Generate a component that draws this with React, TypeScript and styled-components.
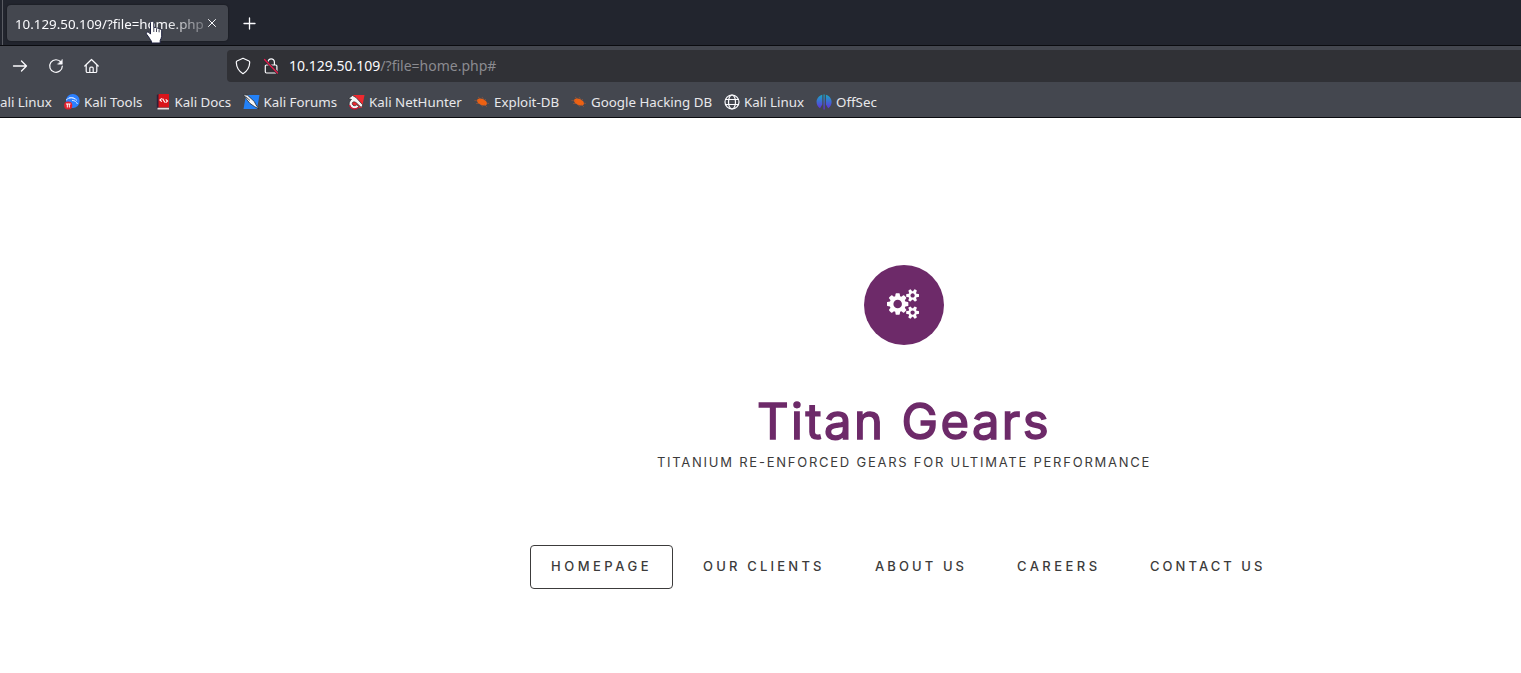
import React from "react";
import styled, { createGlobalStyle } from "styled-components";

const GlobalStyle = createGlobalStyle`
  * { box-sizing: border-box; }
  html, body { margin: 0; background: #fff; overflow: hidden; }
`;

const Page = styled.div`
  width: 100%;
  height: 673px;
  display: flex;
  flex-direction: column;
  overflow: hidden;
  font-family: "Noto Sans", sans-serif;
`;

const TabStrip = styled.div`
  height: 46px;
  flex: none;
  display: flex;
  align-items: center;
  background: #22252e;
  border-bottom: 1px solid #0b0c10;
  padding-left: 2px;
`;

const Separator = styled.span`
  width: 1px;
  height: 45px;
  background: #5a5c63;
  margin-right: 4px;
`;

const Tab = styled.div`
  position: relative;
  width: 221px;
  height: 36px;
  border-radius: 4px;
  background: #44474f;
  box-shadow: 0 0 2px rgba(0, 0, 0, 0.5);
  display: flex;
  align-items: center;
  padding: 0 9px 0 8px;
  justify-content: space-between;
`;

const TabTitle = styled.span`
  width: 190px;
  padding-top: 2px;
  overflow: hidden;
  white-space: nowrap;
  font-size: 13.33px;
  line-height: 20px;
  color: #fbfbfe;
  mask-image: linear-gradient(to right, #000 150px, rgba(0, 0, 0, 0.25) 190px);
`;

const Pointer = styled.svg`
  position: absolute;
  left: 138px;
  top: 15px;
`;

const NewTab = styled.span`
  display: flex;
  margin-left: 15px;
  padding-top: 2px;
`;

const NavBar = styled.div`
  height: 40px;
  flex: none;
  display: flex;
  align-items: center;
  background: #44474f;
`;

const NavButtons = styled.div`
  width: 227px;
  display: flex;
  gap: 20px;
  padding-left: 12px;
`;

const AddressBar = styled.div`
  flex: 1;
  height: 32px;
  display: flex;
  align-items: center;
  background: #303136;
  border-radius: 4px 0 0 4px;
  padding-left: 8px;
  font-size: 14px;
  line-height: 20px;
  color: #fbfbfe;
  white-space: nowrap;
`;

const ShieldSlot = styled.span`
  display: flex;
  margin-right: 12px;
`;

const LockSlot = styled.span`
  display: flex;
  margin-right: 10px;
`;

const UrlPath = styled.span`
  color: #8b8b90;
`;

const Bookmarks = styled.div`
  height: 32px;
  flex: none;
  display: flex;
  align-items: center;
  background: #44474f;
  border-bottom: 1px solid #0b0c10;
  padding-top: 1px;
  color: #e8e8eb;
  font-size: 13.33px;
  line-height: 18px;
  white-space: nowrap;
`;

const Bookmark = styled.div<{ $width: number; $gap?: number }>`
  width: ${(p) => p.$width}px;
  flex: none;
  display: flex;
  align-items: center;
  gap: ${(p) => p.$gap ?? 4}px;
`;

const Content = styled.main`
  flex: 1;
  margin-left: 287px;
  width: 1234px;
  display: flex;
  flex-direction: column;
  align-items: center;
  padding-top: 147px;
  font-family: Inter, "Open Sans", sans-serif;
  color: #3c3b3b;
`;

const Emblem = styled.div`
  width: 80px;
  height: 80px;
  border-radius: 50%;
  background: #6d2a69;
  display: flex;
  align-items: center;
  justify-content: center;
  padding-right: 3px;
  padding-bottom: 3px;
`;

const Title = styled.h1`
  margin: 45px 0 0;
  height: 63px;
  line-height: 64px;
  font-size: 49px;
  font-weight: 400;
  color: #6d2a69;
  letter-spacing: 2.4px;
  -webkit-text-stroke: 1.5px #6d2a69;
  stroke-linejoin: round;
  white-space: nowrap;
`;

const Tagline = styled.p`
  margin: 0;
  height: 18px;
  line-height: 18px;
  font-size: 13px;
  letter-spacing: 1.76px;
  white-space: nowrap;
`;

const Menu = styled.nav`
  margin-top: 74px;
  margin-left: 7px;
  display: flex;
  gap: 10px;
`;

const MenuItem = styled.a<{ $width: number; $spacing: number; $active?: boolean }>`
  width: ${(p) => p.$width}px;
  height: 44px;
  display: flex;
  align-items: center;
  padding: 0 0 2px ${(p) => (p.$active ? 20 : 19)}px;
  border: 1px solid ${(p) => (p.$active ? "#3c3b3b" : "transparent")};
  border-radius: 4px;
  font-size: 13px;
  font-weight: 500;
  letter-spacing: ${(p) => p.$spacing}px;
  white-space: nowrap;
`;

const line = { fill: "none", stroke: "#fbfbfe", strokeLinecap: "round", strokeLinejoin: "round" } as const;

const ToolsIcon = () => (
  <svg width="16" height="16" viewBox="0 0 16 16">
    <circle cx="8.8" cy="7" r="6.9" fill="#2b7fff" />
    <path d="M2 6.200C5 3.200 8 3 11 5M5 4c3-.8 6 0 8 2.500M8 6.500c3 0 4 1 5.500 3.500" fill="none" stroke="#d8e8ff" strokeWidth="1" />
    <circle cx="4.200" cy="11.500" r="4.100" fill="#e5202e" />
    <path d="M2 10h4.600M3.300 10v3.500M5.300 10v3.500" fill="none" stroke="#fff" strokeWidth="1" />
  </svg>
);

const DocsIcon = () => (
  <svg width="16" height="16" viewBox="0 0 16 16">
    <path d="M1.500 1 3 0h10v13.500H1.500z" fill="#d9151b" />
    <path d="M.8 1 2.500 0v13.500L.8 15z" fill="#2e2038" />
    <path d="M1.500 13.800H13v1.700H1.500z" fill="#e8dfe0" />
    <path d="M5.800 4.300 3.900 6l1.900 1.700M9.700 5.300 11.600 7 9.700 8.700M6.600 4.600l2.300 3.900" fill="none" stroke="#fff" strokeWidth="1.100" />
  </svg>
);

const ForumsIcon = () => (
  <svg width="17" height="16" viewBox="0 0 17 16">
    <path d="M3 1h13.500L14 15H.5z" fill="#2381f7" />
    <path d="M.3.600 4.500 1.200l6.800 6.300 1.500 3L16 15l-4.300-2.300L7 9.500l-3.200-4z" fill="#f7f7f7" stroke="#222831" strokeWidth=".8" />
    <path d="M2.500 2.500 7 6.500" stroke="#34383e" strokeWidth=".9" />
  </svg>
);

const HunterIcon = () => (
  <svg width="17" height="16" viewBox="0 0 17 16">
    <path d="M5 1h11.500L14 14H2z" fill="#ed292f" />
    <path
      d="M.5 4.500 4.500 1.500 8 3.500 14.800 11l-1.500 2.500-5-4.700C6 7 3.800 8 4.300 10c.5 2 3 2.300 4.500.8l2.200 2C8.500 16 3 15.500 1.500 12 .5 9.500 1.500 7 3.500 5.500z"
      fill="#f5f5f5"
      stroke="#24272d"
      strokeWidth=".7"
    />
    <path d="M1.600 11C2.500 15 7 16 10.200 13.500" fill="none" stroke="#d41735" strokeWidth="1.400" />
  </svg>
);

const BugIcon = () => (
  <svg width="16" height="16" viewBox="0 0 16 16">
    <ellipse cx="8" cy="8" rx="5.300" ry="3.100" transform="rotate(24 8 8)" fill="#ee6112" />
    <path d="M.5 6.500 5 7M2 9.500h4M4 3l3 2.500M8 3l2 3M12 5l-2 2M12 9l3 .5M10 10l3 3M6 10l3 2.500" fill="none" stroke="#b85c33" strokeWidth=".5" />
  </svg>
);

const GlobeIcon = () => (
  <svg width="16" height="16" viewBox="0 0 16 16" {...line} strokeWidth="1.200">
    <circle cx="8" cy="8" r="7" />
    <ellipse cx="8" cy="8" rx="3.500" ry="7" />
    <path d="M1.500 5.500h13M1.500 10.500h13" />
  </svg>
);

const OffSecIcon = () => (
  <svg width="16" height="16" viewBox="0 0 16 16">
    <defs>
      <linearGradient id="offsec" x1="0" y1="0" x2="0" y2="1">
        <stop offset="0" stopColor="#18a9c5" />
        <stop offset="1" stopColor="#6627df" />
      </linearGradient>
    </defs>
    <path d="M6.300.8v9.700L4 14.200C-.8 11.500-1 3 6.300.8zM7.500.5h1.200v15H7.500zM9.900.8v9.700l2.300 3.700C17 11.500 17.200 3 9.900.8z" fill="url(#offsec)" />
  </svg>
);

const SMALL_GEAR =
  "v140q0 16-149 31-12 27-30 52 51 113 51 138 0 4-4 7-122 71-124 71-8 0-46-47t-52-68q-20 2-30 2t-30-2q-14 21-52 68t-46 47q-2 0-124-71-4-3-4-7 0-25 51-138-18-25-30-52-149-15-149-31v-140q0-16 149-31 13-29 30-52-51-113-51-138 0-4 4-7 4-2 35-20t59-34 30-16q8 0 46 46.500t52 67.500q20-2 30-2t30 2q51-71 92-112l6-2q4 0 124 70 4 3 4 7 0 25-51 138 17 23 30 52 149 15 149 31z";

const GearsIcon = () => (
  <svg width="32" height="30" viewBox="64 0 1920 1792" fill="#fff">
    <path
      fillRule="evenodd"
      d={
        "M960 896q0-106-75-181t-181-75-181 75-75 181 75 181 181 75 181-75 75-181zm768 512q0-52-38-90t-90-38-90 38-38 90q0 53 37.500 90.500t90.500 37.500 90.500-37.500 37.500-90.500zm0-1024q0-52-38-90t-90-38-90 38-38 90q0 53 37.500 90.500t90.500 37.500 90.500-37.500 37.500-90.500zm-384 421v185q0 10-7 19.500t-16 10.500l-155 24q-11 35-32 76 34 48 90 115 7 11 7 20 0 12-7 19-23 30-82.500 89.500t-78.500 59.500q-11 0-21-7l-115-90q-37 19-77 31-11 108-23 155-7 24-30 24h-186q-11 0-20-7.500t-10-17.500l-23-153q-34-10-75-31l-118 89q-7 7-20 7-11 0-21-8-144-133-144-160 0-9 7-19 10-14 41-53t47-61q-23-44-35-82l-152-24q-10-1-17-9.500t-7-19.500v-185q0-10 7-19.500t16-10.500l155-24q11-35 32-76-34-48-90-115-7-11-7-20 0-12 7-20 22-30 82-89t79-59q11 0 21 7l115 90q34-18 77-32 11-108 23-154 7-24 30-24h186q11 0 20 7.500t10 17.500l23 153q34 10 75 31l118-89q8-7 20-7 11 0 21 8 144 133 144 160 0 8-7 19-12 16-42 54t-45 60q23 48 34 82l152 23q10 2 17 10.500t7 19.500zm640 533" +
        SMALL_GEAR +
        "m0-1024" +
        SMALL_GEAR
      }
    />
  </svg>
);

const bookmarks = [
  { label: "Kali Tools", Icon: ToolsIcon, width: 92 },
  { label: "Kali Docs", Icon: DocsIcon, width: 86.5, gap: 2.5 },
  { label: "Kali Forums", Icon: ForumsIcon, width: 105.5 },
  { label: "Kali NetHunter", Icon: HunterIcon, width: 126 },
  { label: "Exploit-DB", Icon: BugIcon, width: 97 },
  { label: "Google Hacking DB", Icon: BugIcon, width: 153 },
  { label: "Kali Linux", Icon: GlobeIcon, width: 92 },
  { label: "OffSec", Icon: OffSecIcon, width: 80 },
];

const menu = [
  { label: "HOMEPAGE", width: 143, spacing: 3.5, active: true },
  { label: "OUR CLIENTS", width: 162, spacing: 3.2 },
  { label: "ABOUT US", width: 132, spacing: 3.1 },
  { label: "CAREERS", width: 123, spacing: 3.45 },
  { label: "CONTACT US", width: 155, spacing: 3.05 },
];

export default function App() {
  return (
    <Page>
      <GlobalStyle />
      <TabStrip>
        <Separator />
        <Tab>
          <TabTitle>10.129.50.109/?file=home.php</TabTitle>
          <svg width="14" height="14" viewBox="0 0 14 14" {...line} strokeWidth="1">
            <path d="m3.500 3.500 7 7m0-7-7 7" />
          </svg>
          <Pointer width="20" height="26" viewBox="0 0 20 26">
            <path
              d="M5.500 2.800c0-2 3.300-2 3.300 0v5c1-.7 2.200-.4 2.600.5 1-.6 2.200-.2 2.500.8 1.500-.6 2.800.2 2.800 1.700v5.500c0 1.800-1.200 2.700-1.500 4.200v2.500H6.500v-1.700C5 19.500 4 17 1.800 14.500c-1.500-2 .8-3.200 2.200-1.900l1.500 1.500z"
              fill="#fff"
              stroke="#1c1f3c"
              strokeWidth="1"
            />
            <path d="M8.800 8v4M11.500 9v3M14.100 9.800v2.500" stroke="#34364a" strokeWidth=".9" />
          </Pointer>
        </Tab>
        <NewTab>
          <svg width="14" height="14" viewBox="0 0 14 14" {...line} strokeWidth="1.300">
            <path d="M6.500 1v11M1 6.500h11" />
          </svg>
        </NewTab>
      </TabStrip>
      <NavBar>
        <NavButtons>
          <svg width="16" height="16" viewBox="0 0 16 16" {...line} strokeWidth="1.300">
            <path d="M1.500 8h13M9.500 3l5 5-5 5" />
          </svg>
          <svg width="16" height="16" viewBox="0 0 16 16" {...line} strokeWidth="1.200">
            <path d="M13 4.200A6.300 6.300 0 1 0 14.300 8" />
            <path d="M14.300 1.700v4.500H9.800z" fill="#fbfbfe" strokeWidth=".5" />
          </svg>
          <svg width="16" height="16" viewBox="0 0 16 16" {...line} strokeWidth="1.200">
            <path d="M.8 8l6.700-6.500L14.200 8M2.200 7v6.200c0 .8.500 1.300 1.300 1.300h8c.8 0 1.300-.5 1.300-1.300V7M5.800 14.300v-4c0-.8.400-1.200 1-1.200h1.400c.6 0 1 .4 1 1.200v4" />
          </svg>
        </NavButtons>
        <AddressBar>
          <ShieldSlot>
            <svg width="16" height="18" viewBox="0 0 16 18" {...line} strokeWidth="1.200">
              <path d="M8 1.300 14 4q.8.400.7 1.500c-.2 5-2.200 8.500-6.700 11.200C3.500 14 1.500 10.500 1.300 5.500Q1.200 4.400 2 4z" />
            </svg>
          </ShieldSlot>
          <LockSlot>
            <svg width="16" height="18" viewBox="0 0 16 18" {...line} strokeWidth="1.200">
              <path d="M5 8V5a3.200 3.200 0 0 1 6.400 0v3M3.500 8h9.200q1.200 0 1.200 1.200v5.600q0 1.200-1.200 1.200H3.500q-1.200 0-1.200-1.200V9.200Q2.300 8 3.500 8z" />
              <path d="M1.500 2.500 14.500 16" stroke="#303136" strokeWidth="2.600" />
              <path d="M1.500 2.500 14.500 16" stroke="#e5184a" strokeWidth="1.300" />
            </svg>
          </LockSlot>
          <span>10.129.50.109</span>
          <UrlPath>/?file=home.php#</UrlPath>
        </AddressBar>
      </NavBar>
      <Bookmarks>
        <Bookmark $width={64}>ali Linux</Bookmark>
        {bookmarks.map(({ label, Icon, width, gap }) => (
          <Bookmark key={label} $width={width} $gap={gap}>
            <Icon />
            <span>{label}</span>
          </Bookmark>
        ))}
      </Bookmarks>
      <Content>
        <Emblem>
          <GearsIcon />
        </Emblem>
        <Title>Titan Gears</Title>
        <Tagline>TITANIUM RE-ENFORCED GEARS FOR ULTIMATE PERFORMANCE</Tagline>
        <Menu>
          {menu.map(({ label, width, spacing, active }) => (
            <MenuItem key={label} $width={width} $spacing={spacing} $active={active}>
              {label}
            </MenuItem>
          ))}
        </Menu>
      </Content>
    </Page>
  );
}
